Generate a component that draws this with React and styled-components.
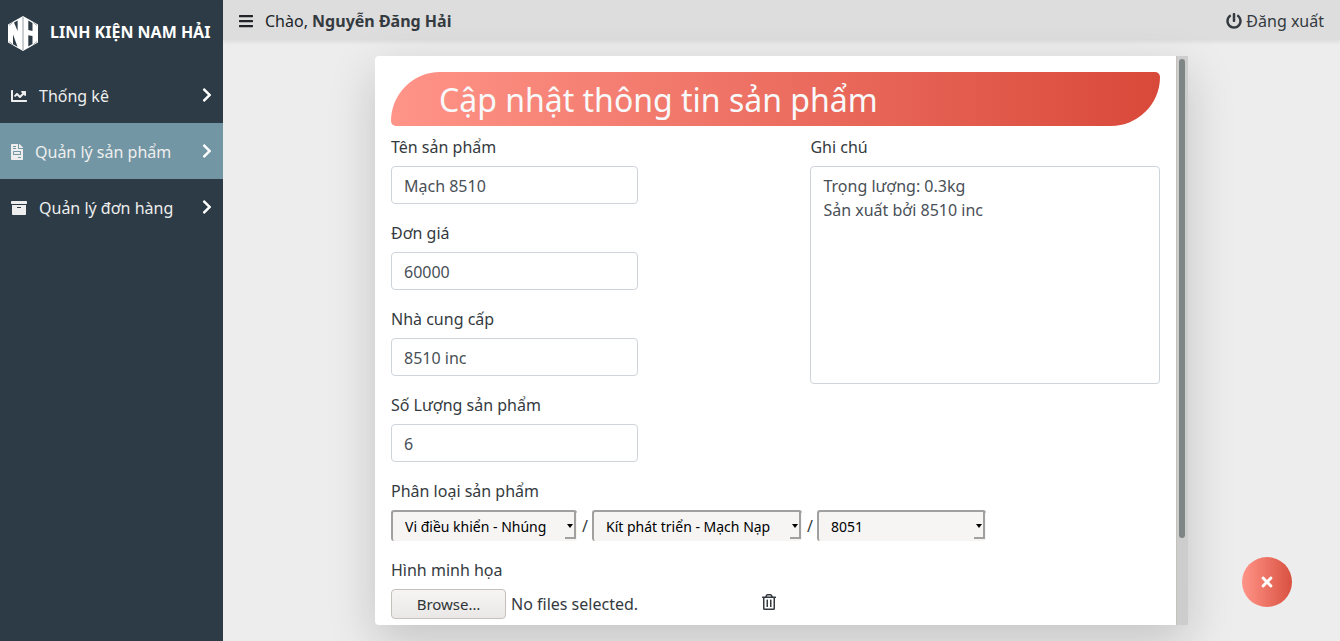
import React, { useRef } from "react";
import styled, { createGlobalStyle } from "styled-components";
import {
  FaArchive,
  FaBars,
  FaChartLine,
  FaChevronRight,
  FaFileInvoice,
  FaPowerOff,
  FaRegTrashAlt,
  FaTimes,
} from "react-icons/fa";

const GlobalStyle = createGlobalStyle`
  *, *::before, *::after { box-sizing: border-box; }
  body {
    margin: 0;
    background: #ededed;
    color: #343a40;
    font-family: "Noto Sans", sans-serif;
    font-size: 16px;
    line-height: 24px;
  }
  button, input, select, textarea { font: inherit; color: inherit; }
  svg { display: block; flex: none; }
`;

const Shell = styled.div`
  display: grid;
  grid-template-columns: 223px minmax(0, 1fr);
  min-height: 100vh;
`;

const Sidebar = styled.aside`
  background: #2c3b45;
  color: #eee;
`;

const Brand = styled.a`
  display: flex;
  align-items: center;
  gap: 12px;
  height: 67px;
  padding: 0 8px;
  color: #fff;
  font-weight: 700;
  white-space: nowrap;
  text-decoration: none;
`;

const BrandName = styled.span`
  padding-bottom: 4px;
`;

const Menu = styled.ul`
  margin: 0;
  padding: 0;
  list-style: none;
`;

const MenuLink = styled.a`
  display: flex;
  align-items: center;
  justify-content: space-between;
  height: 56px;
  padding: 0 11px;
  background: ${(p) => (p.$active ? "#7296a4" : "transparent")};
  color: #eee;
  text-decoration: none;

  > svg { width: 10px; color: #fff; }
`;

const MenuLabel = styled.span`
  display: flex;
  align-items: center;
  gap: 12px;
  padding-top: 2px;

  svg { width: ${(p) => p.$iconWidth}px; }
`;

const Content = styled.div`
  display: flex;
  flex-direction: column;
`;

const TopBar = styled.header`
  display: flex;
  align-items: center;
  justify-content: space-between;
  height: 40px;
  padding: 2px 16px 0;
  background: #ddd;
  box-shadow: 0 2px 4px rgba(0, 0, 0, 0.075);
`;

const Greeting = styled.div`
  display: flex;
  align-items: center;
  gap: 12px;
  color: #212529;

  strong { font-weight: 700; color: #343a40; }
`;

const IconButton = styled.button`
  display: flex;
  padding: 0;
  border: 0;
  background: none;
  cursor: pointer;

  svg { width: ${(p) => p.$size}px; }
`;

const Logout = styled.a`
  display: flex;
  align-items: center;
  gap: 4px;
  color: #343a40;
  text-decoration: none;
`;

const Card = styled.main`
  display: grid;
  grid-template-columns: minmax(0, 1fr) 12px;
  height: calc(100vh - 72px);
  margin: 16px 152px;
  border-radius: 4px 0 0 4px;
  background: #fff;
  box-shadow: 0 16px 48px rgba(0, 0, 0, 0.175);
  overflow: hidden;
`;

const Form = styled.form`
  padding: 16px;
  overflow-y: auto;
  scrollbar-width: none;
`;

const ScrollTrack = styled.div`
  padding: 3px 3px 3px 2px;
  border-left: 1px solid #c5c1bb;
  background: #cdcdcd;
`;

const ScrollThumb = styled.div`
  width: 6px;
  height: 85%;
  border-radius: 3px;
  background: #7f8484;
`;

const Title = styled.h1`
  margin: 0 0 8px;
  padding: 9px 48px 7px;
  border-radius: 50px 5px 50px 5px;
  background: linear-gradient(to right, #ff9488, #d9493a);
  color: #f8f9fa;
  font-size: 32px;
  font-weight: 400;
  line-height: 38px;
`;

const Columns = styled.div`
  display: grid;
  grid-template-columns: 6fr 5fr;
`;

const Group = styled.div`
  display: flex;
  flex-direction: column;
  align-items: flex-start;
  gap: 7px;
  margin-bottom: 16px;
`;

const Label = styled.label`
  padding-top: 1px;
`;

const TextInput = styled.input`
  width: 59%;
  height: 38px;
  padding: 7px 12px 5px;
  border: 1px solid #ced4da;
  border-radius: 4px;
  background: #fff;
  color: #495057;
`;

const Notes = styled.textarea`
  width: 100%;
  height: 218px;
  padding: 7px 12px 5px;
  border: 1px solid #ced4da;
  border-radius: 4px;
  background: #fff;
  color: #495057;
  resize: none;
`;

const SelectRow = styled.div`
  display: flex;
  align-items: center;
  gap: 5px;
`;

const Separator = styled.span`
  width: 5px;
`;

const SelectBox = styled.div`
  position: relative;
  width: ${(p) => p.$width}px;

  &::before {
    content: "";
    position: absolute;
    right: 1px;
    bottom: 2px;
    width: 11px;
    height: 27px;
    border: solid #a0a0a0;
    border-width: 0 2px 2px 0;
    pointer-events: none;
  }

  &::after {
    content: "";
    position: absolute;
    right: 4px;
    top: 14px;
    border: 3px solid transparent;
    border-top: 4px solid #000;
    border-bottom: 0;
    pointer-events: none;
  }
`;

const Select = styled.select`
  display: block;
  width: 100%;
  height: 31px;
  padding: 0 12px;
  border: solid #a0a0a0;
  border-width: 2px 0 0 2px;
  border-radius: 3px;
  background: #f6f5f4;
  color: #000;
  font-size: 14px;
  line-height: 20px;
  appearance: none;
`;

const FileRow = styled.div`
  display: grid;
  grid-template-columns: 371px auto;
  align-items: center;
`;

const FilePicker = styled.div`
  display: flex;
  align-items: center;
  gap: 5px;
`;

const DeleteButton = styled(IconButton)`
  padding-bottom: 4px;
`;

const BrowseButton = styled.button`
  width: 115px;
  height: 30px;
  padding: 0;
  border: 1px solid #c4c0bb;
  border-radius: 4px;
  background: linear-gradient(#f6f5f4, #e9e8e6);
  color: #2e3436;
  font-size: 15px;
  line-height: 20px;
`;

const CloseButton = styled.button`
  position: fixed;
  right: 48px;
  bottom: 34px;
  display: flex;
  align-items: center;
  justify-content: center;
  width: 50px;
  height: 50px;
  padding: 0;
  border: 0;
  border-radius: 50%;
  background: linear-gradient(to right, #ff9488, #d95140);
  color: #fff;
`;

function Logo() {
  return (
    <svg width="30" height="35" viewBox="0 0 30 35" aria-hidden="true">
      <path d="M15 0 30 8.500v18L15 35 0 26.500v-18z" fill="#fff" />
      <g fill="#2c3b45">
        <path d="M6 6.500 9.600 4.500v10.500z" />
        <path d="M5 18.500v9.700l4.500 2.600z" />
        <path d="M20.300 4.500 24.500 7v8l-4.200-1z" />
        <path d="M20.300 19.300 24.500 20v8l-4.200 2.500z" />
      </g>
      <path
        d="M15 1v33M1 9.500 4.500 6.500M1 25.500l3.500 3M29 9.500l-3.500-3M29 25.500l-3.500 3"
        fill="none"
        stroke="#7c868d"
        strokeWidth=".8"
      />
    </svg>
  );
}

const MENU = [
  { label: "Thống kê", Icon: FaChartLine, width: 16 },
  { label: "Quản lý sản phẩm", Icon: FaFileInvoice, width: 12, active: true },
  { label: "Quản lý đơn hàng", Icon: FaArchive, width: 16 },
];

const FIELDS = [
  { id: "name", label: "Tên sản phẩm", value: "Mạch 8510" },
  { id: "price", label: "Đơn giá", value: "60000" },
  { id: "supplier", label: "Nhà cung cấp", value: "8510 inc" },
  { id: "quantity", label: "Số Lượng sản phẩm", value: "6" },
];

const CATEGORIES = [
  { value: "Vi điều khiển - Nhúng", width: 186 },
  { value: "Kít phát triển - Mạch Nạp", width: 210 },
  { value: "8051", width: 169 },
];

export default function App() {
  const fileInput = useRef(null);

  return (
    <>
      <GlobalStyle />
      <Shell>
        <Sidebar>
          <Brand href="#home">
            <Logo />
            <BrandName>LINH KIỆN NAM HẢI</BrandName>
          </Brand>
          <nav>
            <Menu>
              {MENU.map(({ label, Icon, width, active }) => (
                <li key={label}>
                  <MenuLink href="#menu" $active={active}>
                    <MenuLabel $iconWidth={width}>
                      <Icon />
                      {label}
                    </MenuLabel>
                    <FaChevronRight />
                  </MenuLink>
                </li>
              ))}
            </Menu>
          </nav>
        </Sidebar>

        <Content>
          <TopBar>
            <Greeting>
              <IconButton type="button" $size={14} aria-label="Menu">
                <FaBars />
              </IconButton>
              <span>
                Chào, <strong>Nguyễn Đăng Hải</strong>
              </span>
            </Greeting>
            <Logout href="#logout">
              <FaPowerOff />
              Đăng xuất
            </Logout>
          </TopBar>

          <Card>
            <Form>
              <Title>Cập nhật thông tin sản phẩm</Title>
              <Columns>
                <div>
                  {FIELDS.map((f) => (
                    <Group key={f.id}>
                      <Label htmlFor={f.id}>{f.label}</Label>
                      <TextInput id={f.id} type="text" defaultValue={f.value} />
                    </Group>
                  ))}
                </div>
                <Group>
                  <Label htmlFor="notes">Ghi chú</Label>
                  <Notes
                    id="notes"
                    defaultValue={"Trọng lượng: 0.3kg\nSản xuất bởi 8510 inc"}
                  />
                </Group>
              </Columns>

              <Group>
                <Label htmlFor="category-0">Phân loại sản phẩm</Label>
                <SelectRow>
                  {CATEGORIES.map((c, i) => (
                    <React.Fragment key={c.value}>
                      {i > 0 && <Separator>/</Separator>}
                      <SelectBox $width={c.width}>
                        <Select id={`category-${i}`} aria-label={c.value}>
                          <option>{c.value}</option>
                        </Select>
                      </SelectBox>
                    </React.Fragment>
                  ))}
                </SelectRow>
              </Group>

              <Group>
                <Label htmlFor="images">Hình minh họa</Label>
                <FileRow>
                  <FilePicker>
                    <input id="images" type="file" multiple hidden ref={fileInput} />
                    <BrowseButton
                      type="button"
                      onClick={() => fileInput.current.click()}
                    >
                      Browse…
                    </BrowseButton>
                    <span>No files selected.</span>
                  </FilePicker>
                  <DeleteButton type="button" $size={14} aria-label="Xóa">
                    <FaRegTrashAlt />
                  </DeleteButton>
                </FileRow>
              </Group>
            </Form>
            <ScrollTrack>
              <ScrollThumb />
            </ScrollTrack>
          </Card>
        </Content>
      </Shell>
      <CloseButton type="button" aria-label="Đóng">
        <FaTimes />
      </CloseButton>
    </>
  );
}
